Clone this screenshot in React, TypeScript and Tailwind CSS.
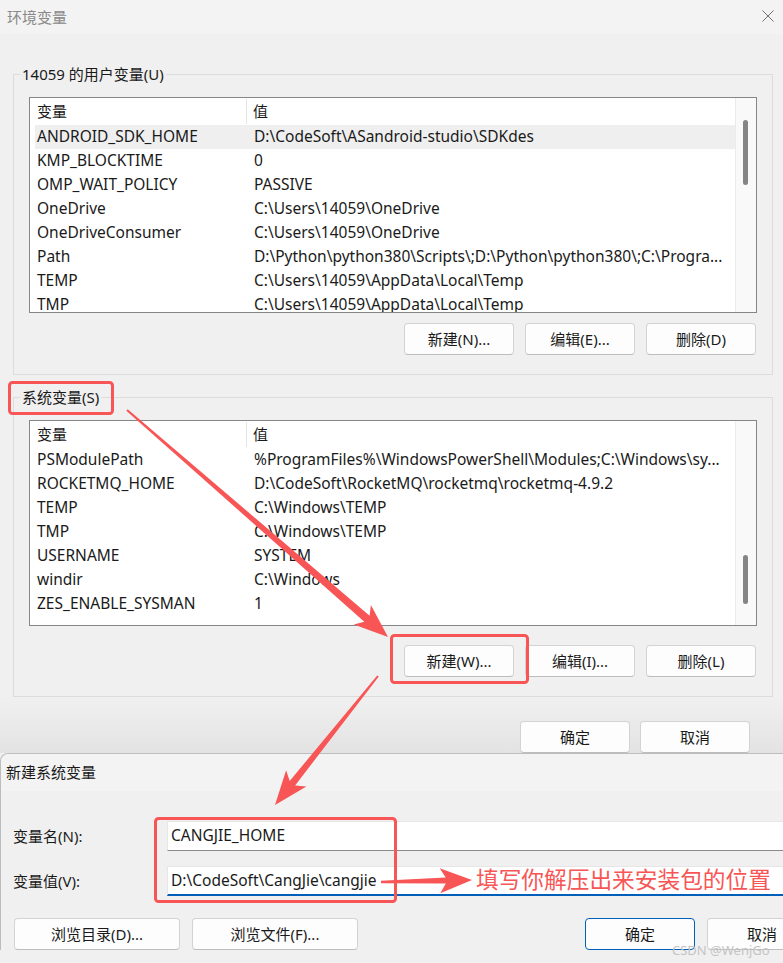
import React from "react";

type Row = { name: string; value: string; selected?: boolean };

const userVars: Row[] = [
  { name: "ANDROID_SDK_HOME", value: "D:\\CodeSoft\\ASandroid-studio\\SDKdes", selected: true },
  { name: "KMP_BLOCKTIME", value: "0" },
  { name: "OMP_WAIT_POLICY", value: "PASSIVE" },
  { name: "OneDrive", value: "C:\\Users\\14059\\OneDrive" },
  { name: "OneDriveConsumer", value: "C:\\Users\\14059\\OneDrive" },
  { name: "Path", value: "D:\\Python\\python380\\Scripts\\;D:\\Python\\python380\\;C:\\Progra..." },
  { name: "TEMP", value: "C:\\Users\\14059\\AppData\\Local\\Temp" },
  { name: "TMP", value: "C:\\Users\\14059\\AppData\\Local\\Temp" },
];

const sysVars: Row[] = [
  { name: "PSModulePath", value: "%ProgramFiles%\\WindowsPowerShell\\Modules;C:\\Windows\\sy..." },
  { name: "ROCKETMQ_HOME", value: "D:\\CodeSoft\\RocketMQ\\rocketmq\\rocketmq-4.9.2" },
  { name: "TEMP", value: "C:\\Windows\\TEMP" },
  { name: "TMP", value: "C:\\Windows\\TEMP" },
  { name: "USERNAME", value: "SYSTEM" },
  { name: "windir", value: "C:\\Windows" },
  { name: "ZES_ENABLE_SYSMAN", value: "1" },
];

function Button({ label, primary }: { label: string; primary?: boolean }) {
  return (
    <div
      className={`flex h-[32px] w-[110px] items-center justify-center rounded-[4px] border bg-[#fdfdfd] text-[15px] ${
        primary ? "border-[#005fb8]" : "border-[#d3d3d3] border-b-[#bdbdbd]"
      }`}
    >
      {label}
    </div>
  );
}

function VarList({
  rows,
  boxClass,
  thumbClass,
}: {
  rows: Row[];
  boxClass: string;
  thumbClass: string;
}) {
  return (
    <div className={`flex overflow-hidden border border-[#868686] bg-white text-[15.5px] ${boxClass}`}>
      <div className="flex-1 overflow-hidden pl-[5px]">
        <div className="flex h-[27px] items-center text-[15px]">
          <div className="flex h-[25px] w-[212px] items-center border-r border-[#e5e5e5] pl-[2px]">变量</div>
          <div className="pl-[6px]">值</div>
        </div>
        {rows.map((r, i) => (
          <div
            key={i}
            className={`flex h-[24px] items-center whitespace-nowrap ${r.selected ? "bg-[#efefef]" : ""}`}
          >
            <div className="w-[212px] pl-[2px]">{r.name}</div>
            <div className="overflow-hidden pl-[7px]">{r.value}</div>
          </div>
        ))}
      </div>
      <div className="w-[21px] border-l border-[#ebebeb] bg-[#f9f9f9]">
        <div className={`ml-[7px] w-[5px] rounded-full bg-[#858585] ${thumbClass}`} />
      </div>
    </div>
  );
}

function arrowPoints(
  x1: number,
  y1: number,
  x2: number,
  y2: number,
  head: number,
  half: number,
  w0: number,
  w1: number
) {
  const dx = x2 - x1;
  const dy = y2 - y1;
  const len = Math.hypot(dx, dy);
  const ux = dx / len;
  const uy = dy / len;
  const nx = -uy;
  const ny = ux;
  const bx = x2 - ux * head;
  const by = y2 - uy * head;
  const jx = bx + ux * head * 0.18;
  const jy = by + uy * head * 0.18;
  const pts = [
    [x2, y2],
    [bx + nx * half, by + ny * half],
    [jx + nx * w1, jy + ny * w1],
    [x1 + nx * w0, y1 + ny * w0],
    [x1 - nx * w0, y1 - ny * w0],
    [jx - nx * w1, jy - ny * w1],
    [bx - nx * half, by - ny * half],
  ];
  return pts.map(([a, b]) => `${a.toFixed(1)},${b.toFixed(1)}`).join(" ");
}

const RED = "#f85656";

export default function App() {
  return (
    <div className="relative h-[963px] w-[783px] overflow-hidden bg-[#f0f0f0] font-['Noto_Sans','Noto_Sans_CJK_SC',sans-serif] text-[15px] text-[#1a1a1a]">
      {/* title bar */}
      <div className="flex h-[34px] items-center justify-between bg-[#f3f3f3] pl-[7px] pr-[9px]">
        <span className="text-[#8a8a8a]">环境变量</span>
        <svg width="12" height="12" viewBox="0 0 12 12" className="mb-[3px]">
          <path d="M0.5 0.5 L11.5 11.5 M11.5 0.5 L0.5 11.5" stroke="#707070" strokeWidth="1" fill="none" />
        </svg>
      </div>

      <div className="pl-[13px] pr-[10px] pt-[30px]">
        <fieldset className="border border-[#dcdcdc] px-[6px] pb-[19px]">
          <legend className="px-[2px] leading-[20px]">14059 的用户变量(U)</legend>
          <div className="px-[9px] pt-[13px]">
            <VarList rows={userVars} boxClass="h-[216px]" thumbClass="mt-[22px] h-[65px]" />
            <div className="mt-[10px] flex justify-end gap-[11px] pr-[1px]">
              <Button label="新建(N)..." />
              <Button label="编辑(E)..." />
              <Button label="删除(D)" />
            </div>
          </div>
        </fieldset>

        <fieldset className="mt-[12px] border border-[#dcdcdc] px-[6px] pb-[19px]">
          <legend className="px-[2px] leading-[20px]">系统变量(S)</legend>
          <div className="px-[9px] pt-[13px]">
            <VarList rows={sysVars} boxClass="h-[206px]" thumbClass="mt-[134px] h-[49px]" />
            <div className="mt-[19px] flex justify-end gap-[11px] pr-[1px]">
              <Button label="新建(W)..." />
              <Button label="编辑(I)..." />
              <Button label="删除(L)" />
            </div>
          </div>
        </fieldset>
      </div>

      <div className="flex justify-end gap-[10px] bg-linear-to-b from-[#f0f0f0] to-[#e3e3e3] pr-[33px] pt-[24px]">
        <Button label="确定" />
        <Button label="取消" />
      </div>

      {/* new system variable dialog */}
      <div className="w-[830px] rounded-tl-[8px] border-l border-t border-[#bdbdbd] bg-[#f0f0f0]">
        <div className="flex h-[37px] items-center rounded-tl-[8px] bg-[#f3f3f3] pl-[5px]">新建系统变量</div>
        <div className="pl-[12px] pr-[12px] pt-[30px]">
          <div className="flex h-[30px] items-center">
            <div className="w-[154px]">变量名(N):</div>
            <div className="flex h-[30px] flex-1 items-center border border-[#e6e6e6] border-b-[#8a8a8a] bg-white pl-[3px] text-[15.5px]">
              CANGJIE_HOME
            </div>
          </div>
          <div className="mt-[15px] flex h-[30px] items-center">
            <div className="w-[154px]">变量值(V):</div>
            <div className="flex h-[30px] flex-1 items-center border border-[#e6e6e6] border-b-2 border-b-[#005fb8] bg-white pl-[3px] text-[15.5px]">
              D:\CodeSoft\CangJie\cangjie
            </div>
          </div>
          <div className="mt-[22px] flex items-center pl-[1px]">
            <div className="flex h-[32px] w-[166px] items-center justify-center rounded-[4px] border border-[#d3d3d3] border-b-[#bdbdbd] bg-[#fdfdfd]">
              浏览目录(D)...
            </div>
            <div className="ml-[12px] flex h-[32px] w-[166px] items-center justify-center rounded-[4px] border border-[#d3d3d3] border-b-[#bdbdbd] bg-[#fdfdfd]">
              浏览文件(F)...
            </div>
            <div className="ml-[227px]">
              <Button label="确定" primary />
            </div>
            <div className="ml-[12px]">
              <Button label="取消" />
            </div>
          </div>
        </div>
      </div>

      {/* annotations */}
      <svg
        className="pointer-events-none absolute left-0 top-0"
        width="783"
        height="963"
        viewBox="0 0 783 963"
      >
        <rect x="9.5" y="382.5" width="103" height="31" rx="3" fill="none" stroke={RED} strokeWidth="3" />
        <rect x="391.5" y="635.5" width="136" height="47" rx="3" fill="none" stroke={RED} strokeWidth="3" />
        <rect x="155.5" y="818.5" width="240" height="83" rx="3" fill="none" stroke={RED} strokeWidth="3" />
        <polygon points={arrowPoints(127, 410, 388, 637, 34, 13, 1, 4)} fill={RED} />
        <polygon points={arrowPoints(378, 676, 275, 805, 34, 13, 1, 3.5)} fill={RED} />
        <polygon points={arrowPoints(381, 882, 472, 880, 32, 12.5, 1.2, 3)} fill={RED} />
      </svg>
      <div className="pointer-events-none absolute left-[476px] top-[864px] whitespace-nowrap font-['Noto_Sans_CJK_SC',sans-serif] text-[22.7px] leading-[30px] text-[#f85656]">
        填写你解压出来安装包的位置
      </div>
      <div className="pointer-events-none absolute left-[672px] top-[942px] text-[13px] leading-[16px] text-[#c4c4c4]">
        CSDN @WenjGo
      </div>
    </div>
  );
}
